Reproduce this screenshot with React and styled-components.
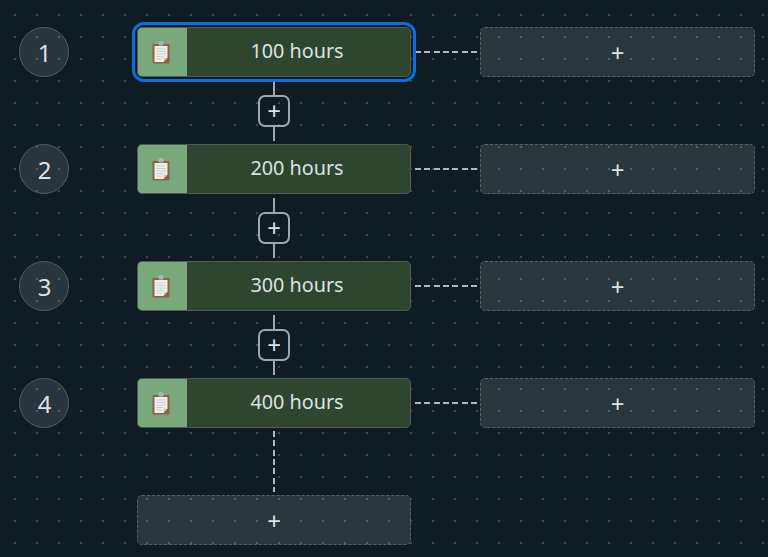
import React from 'react';
import styled, { createGlobalStyle } from 'styled-components';

const GlobalStyle = createGlobalStyle`
  html, body {
    margin: 0;
    padding: 0;
    background: #0f1c24;
  }
  body {
    font-family: "Noto Sans", "Open Sans", sans-serif;
    overflow: hidden;
  }
`;

const Canvas = styled.div`
  width: 768px;
  height: 557px;
  box-sizing: border-box;
  padding: 27px 0 0 19px;
  background-color: #0f1c24;
  background-image: radial-gradient(circle at 1px 1px, #3c484e 1px, transparent 1.1px);
  background-size: 22px 22px;
  background-position: 14px 14px;
  overflow: hidden;
`;

const Row = styled.div`
  display: flex;
  align-items: center;
  height: 50px;
`;

const Level = styled.div`
  width: 50px;
  height: 50px;
  box-sizing: border-box;
  margin-right: 68px;
  padding-left: 1px;
  border-radius: 50%;
  border: 1px solid #565b5e;
  background: rgba(255, 255, 255, 0.11);
  color: #dde1e5;
  font-size: 24px;
  display: flex;
  align-items: center;
  justify-content: center;
`;

const Card = styled.div`
  position: relative;
  width: 274px;
  height: 50px;
  box-sizing: border-box;
  display: flex;
  border: 1px solid #53585a;
  border-radius: 5px;
  background: #2e462f;
  ${({ $selected }) => $selected && `
    &::after {
      content: '';
      position: absolute;
      inset: -6px;
      border: 3px solid #0a6fdc;
      border-radius: 12px;
    }
  `}
`;

const IconBox = styled.div`
  width: 49px;
  flex-shrink: 0;
  padding-right: 3px;
  box-sizing: border-box;
  background: #79a97a;
  border-radius: 4px 0 0 4px;
  display: flex;
  align-items: center;
  justify-content: center;
`;

const Label = styled.div`
  flex: 1;
  padding-right: 3px;
  color: #dde1e5;
  font-size: 19.8px;
  line-height: 45px;
  text-align: center;
`;

const DashH = styled.div`
  width: 62px;
  height: 2px;
  margin: 0 3px 0 4px;
  background: repeating-linear-gradient(to right, #b3b7b8 0 6px, transparent 6px 9.33px);
`;

const Slot = styled.div`
  width: ${({ $wide }) => ($wide ? 275 : 274)}px;
  height: 50px;
  box-sizing: border-box;
  border: 1px dashed #5a6064;
  border-radius: 5px;
  background: rgba(255, 255, 255, 0.115);
  color: #dde1e5;
  font-size: 24px;
  line-height: 1;
  display: flex;
  align-items: center;
  justify-content: center;
  padding-top: 1px;
`;

const Junction = styled.div`
  width: 274px;
  height: 67px;
  box-sizing: border-box;
  margin-left: 118px;
  padding: 4px 0 3px;
  display: flex;
  flex-direction: column;
  align-items: center;
`;

const Line = styled.div`
  width: 2px;
  flex: 1;
  background: #a3a7a9;
`;

const AddButton = styled.div`
  width: 32px;
  height: 32px;
  box-sizing: border-box;
  border: 2px solid #a3a7a9;
  border-radius: 7px;
  color: #dde1e5;
  font-size: 24px;
  line-height: 1;
  display: flex;
  align-items: center;
  justify-content: center;
`;

const DashV = styled.div`
  width: 2px;
  height: 61px;
  margin: 3px 0;
  background: repeating-linear-gradient(to bottom, #b3b7b8 0 6px, transparent 6px 9.33px);
`;

const Tail = styled.div`
  margin-left: 118px;
  width: 274px;
  display: flex;
  flex-direction: column;
  align-items: center;
`;

function ClipboardIcon() {
  return (
    <svg width="18" height="23" viewBox="0 0 18 23">
      <rect x="0.5" y="3" width="17" height="19.5" rx="1" fill="#8f5f47" />
      <path d="M2.5 5h13v11.5l-4 4.5h-9z" fill="#eeeeea" />
      <path d="M11.5 21l.6-4 3.4-.5z" fill="#c9c6bf" />
      <path d="M4.5 8h9M4.5 10.5h9M4.5 13h9M4.5 15.5h7M4.5 18h5" stroke="#cfcfca" strokeWidth="1" />
      <rect x="6.5" y="0" width="5" height="4.5" rx="1.5" fill="#a9b5a8" />
    </svg>
  );
}

const hours = [100, 200, 300, 400];

export default function App() {
  return (
    <>
      <GlobalStyle />
      <Canvas>
        {hours.map((h, i) => (
          <React.Fragment key={h}>
            <Row>
              <Level>{i + 1}</Level>
              <Card $selected={i === 0}>
                <IconBox><ClipboardIcon /></IconBox>
                <Label>{h} hours</Label>
              </Card>
              <DashH />
              <Slot $wide>+</Slot>
            </Row>
            {i < hours.length - 1 && (
              <Junction>
                <Line />
                <AddButton>+</AddButton>
                <Line />
              </Junction>
            )}
          </React.Fragment>
        ))}
        <Tail>
          <DashV />
          <Slot>+</Slot>
        </Tail>
      </Canvas>
    </>
  );
}
